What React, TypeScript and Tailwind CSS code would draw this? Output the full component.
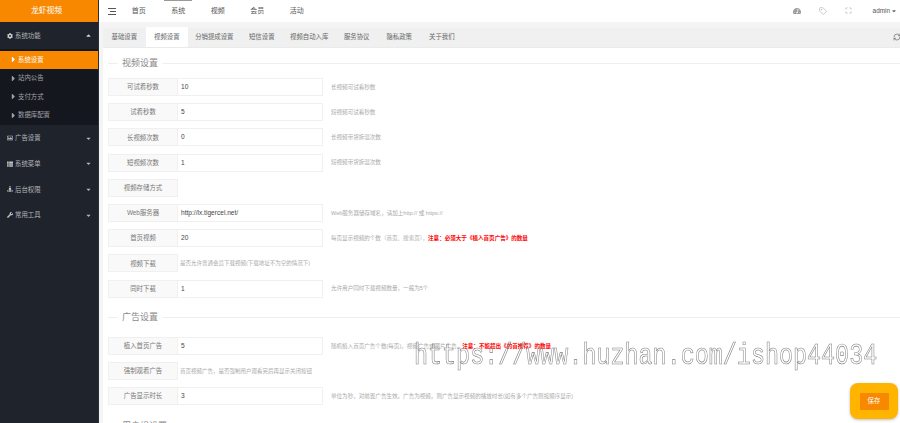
import React from 'react';
import { Tag, Scan, RefreshCw } from 'lucide-react';
import { FaCog, FaRegImage, FaThList, FaStreetView, FaWrench, FaCaretUp, FaCaretDown, FaCaretRight, FaTachometerAlt } from 'react-icons/fa';
import type { IconType } from 'react-icons';

const navItems = ['首页', '系统', '视频', '会员', '活动'];
const tabs = ['基础设置', '视频设置', '分销提成设置', '短信设置', '视频自动入库', '服务协议', '隐私政策', '关于我们'];
const subMenu = ['系统设置', '站内公告', '支付方式', '数据库配置'];
const menus: { name: string; icon: IconType }[] = [
    { name: '广告设置', icon: FaRegImage },
    { name: '系统菜单', icon: FaThList },
    { name: '后台权限', icon: FaStreetView },
    { name: '常用工具', icon: FaWrench },
];

type Row = { label: string; value?: string; desc?: string; note?: string; inlineDesc?: string };

const videoRows: Row[] = [
    { label: '可试看秒数', value: '10', desc: '长视频可试看秒数' },
    { label: '试看秒数', value: '5', desc: '短视频可试看秒数' },
    { label: '长视频次数', value: '0', desc: '长视频带货拆温次数' },
    { label: '短视频次数', value: '1', desc: '短视频带货拆温次数' },
    { label: '视频存储方式' },
    { label: 'Web服务器', value: 'http://lx.tigercel.net/', desc: 'Web服务器储存域名，请加上http:// 或 https://' },
    { label: '首页视频', value: '20', desc: '每页显示视频的个数（首页、搜索页），', note: '注意：必须大于《植入首页广告》的数量' },
    { label: '视频下载', inlineDesc: '是否允许普通会员下载视频(下载地址不为空的情况下)' },
    { label: '同时下载', value: '1', desc: '允许用户同时下载视频数量，一般为5个' },
];

const adRows: Row[] = [
    { label: '植入首页广告', value: '5', desc: '随机植入首页广告个数(每页)，视频广告或图片广告。', note: '注意：不能超出《的首推荐》的数量' },
    { label: '强制观看广告', inlineDesc: '首页视频广告，是否强制用户观看完后再显示关闭按钮' },
    { label: '广告显示时长', value: '3', desc: '单位为秒，对前置广告生效。广告为视频，则广告显示视频的播放时长(如有多个广告则按顺序显示)' },
];

const SectionTitle = ({ title }: { title: string }) => (
    <div className="flex items-center h-[12px]">
        <div className="w-[9px] h-px bg-[#eeeeee]"></div>
        <span className="mx-[5px] text-[9px] leading-[12px] text-[#8a8a8a]">{title}</span>
        <div className="flex-1 h-px bg-[#eeeeee]"></div>
    </div>
);

const FormRow = ({ row }: { row: Row }) => (
    <div className="flex items-center h-[18px] mb-[7.2px]">
        <div className="w-[70px] h-full flex items-center justify-center bg-[#f9f9f9] border border-[#f0f0f0] text-[6.4px] text-[#777777]">
            {row.label}
        </div>
        {row.inlineDesc && <span className="ml-[2px] text-[5.5px] text-[#aaaaaa] whitespace-nowrap">{row.inlineDesc}</span>}
        {!row.inlineDesc && row.value !== undefined && (
            <>
                <div className="w-[145px] h-full flex items-center pl-[3px] bg-white border border-l-0 border-[#f0f0f0] text-[6.6px] text-[#444444]">
                    {row.value}
                </div>
                <span className="ml-[8px] text-[5.55px] text-[#aaaaaa] whitespace-nowrap">
                    {row.desc}
                    {row.note && <span className="text-[#ff0000] font-bold">{row.note}</span>}
                </span>
            </>
        )}
    </div>
);

const App: React.FC = () => {
    return (
        <div className="relative flex w-[900px] h-[423px] overflow-hidden bg-white font-['Liberation_Sans','Noto_Sans_CJK_SC',sans-serif]">
            {/* Sidebar */}
            <aside className="w-[99px] shrink-0 bg-[#1f232c] text-[#b4b6ba] border-r border-[#2a2e36]">
                <div className="h-[22px] flex items-center justify-center pr-[5px] bg-[#f78800] text-[7.8px] text-white">龙虾视频</div>
                <div className="h-[27px] flex items-center pl-[7px] pr-[6px] text-[6.4px]">
                    <FaCog className="w-[6px] h-[6px] mr-[2px] text-[#d0d0d0]" />
                    <span>系统功能</span>
                    <FaCaretUp className="ml-auto w-[7px] h-[7px] text-[#d8d8d8]" />
                </div>
                <div className="bg-[#15171e] pt-[1.5px]">
                    {subMenu.map((item, i) => (
                        <div key={item} className={`h-[18.5px] flex items-center pl-[9px] text-[6.4px] ${i === 0 ? 'bg-[#f78800] text-white' : 'text-[#a0a2a6]'}`}>
                            <FaCaretRight className="w-[9px] h-[9px] mr-[0px]" />
                            <span>{item}</span>
                        </div>
                    ))}
                </div>
                <div className="pt-[1px]">
                    {menus.map((m) => {
                        const Icon = m.icon;
                        return (
                            <div key={m.name} className="h-[25.6px] flex items-center pl-[7px] pr-[6px] text-[6.4px]">
                                <Icon className="w-[6px] h-[6px] mr-[2px] text-[#c0c2c6]" />
                                <span>{m.name}</span>
                                <FaCaretDown className="ml-auto w-[7px] h-[7px] text-[#b8b8b8]" />
                            </div>
                        );
                    })}
                </div>
            </aside>

            <div className="flex-1 min-w-0 flex flex-col">
                {/* Top bar */}
                <header className="h-[22px] shrink-0 flex items-center text-[7px] text-[#555555]">
                    <svg viewBox="0 0 8 7" className="ml-[9px] w-[8px] h-[7px]" fill="none" stroke="#555555" strokeWidth="1">
                        <path d="M0 .5h8M2 3.5h6M0 6.5h8" />
                    </svg>
                    <nav className="flex ml-[3px]">
                        {navItems.map((item, i) => (
                            <div key={item} className="relative w-[39.5px] h-[22px] flex items-center justify-center">
                                {i === 1 && <div className="absolute top-0 left-[5px] right-[6px] h-px bg-[#999999]"></div>}
                                {item}
                            </div>
                        ))}
                    </nav>
                    <div className="ml-auto flex items-center text-[#999999]">
                        <FaTachometerAlt className="w-[8px] h-[8px]" />
                        <Tag className="ml-[18px] w-[8px] h-[8px]" strokeWidth={1.5} />
                        <Scan className="ml-[18px] w-[7px] h-[7px]" strokeWidth={2} />
                        <span className="ml-[21px] text-[6.4px] text-[#555555]">admin</span>
                        <FaCaretDown className="ml-[1px] mr-[3px] w-[6px] h-[6px] text-[#666666]" />
                    </div>
                </header>

                <div className="flex-1 min-h-0 flex bg-[#f4f4f4] pl-[4px]">
                    <div className="flex-1 min-w-0 flex flex-col">
                        {/* Tabs */}
                        <div className="h-[20px] shrink-0 mt-[6px] flex items-end bg-[#f0f0f0] border-b border-[#eaeaea]">
                            <div className="flex h-[20px]">
                                {tabs.map((t, i) => (
                                    <div key={t} className={`h-full flex items-center text-[6.4px] text-[#666666] ${t.length === 6 ? 'px-[7px]' : 'px-[8.5px]'} ${i === 1 ? 'bg-white' : ''}`}>
                                        {t}
                                    </div>
                                ))}
                            </div>
                            <RefreshCw className="ml-auto mb-[6px] mr-[-1px] w-[8px] h-[8px] shrink-0 text-[#666666]" />
                        </div>

                        {/* Form */}
                        <main className="flex-1 min-h-0 overflow-hidden bg-white pt-[9px] pl-[5px]">
                            <SectionTitle title="视频设置" />
                            <div className="mt-[9px]">
                                {videoRows.map((r) => <FormRow key={r.label} row={r} />)}
                            </div>
                            <div className="pt-[6.7px]">
                                <SectionTitle title="广告设置" />
                            </div>
                            <div className="mt-[13.5px]">
                                {adRows.map((r) => <FormRow key={r.label} row={r} />)}
                            </div>
                            <div className="pt-[7.5px]">
                                <SectionTitle title="用户组设置" />
                            </div>
                        </main>
                    </div>
                </div>
            </div>

            {/* Watermark over the page */}
            <div className="absolute left-[414px] top-[342px] scale-y-[1.25] will-change-transform font-['Liberation_Mono',monospace] text-[23.4px] leading-[28px] whitespace-nowrap text-transparent [-webkit-text-stroke:0.5px_#808080]">
                https://www.huzhan.com/ishop44034
            </div>

            {/* Floating save */}
            <div className="absolute left-[850px] top-[383px] w-[48px] h-[36px] flex items-center justify-center rounded-[8px] bg-[#ffb400] shadow-[0_1px_3px_rgba(0,0,0,0.25)]">
                <div className="w-[29px] h-[17px] flex items-center justify-center bg-[#f78800] text-[6.4px] text-white">保存</div>
            </div>
        </div>
    );
};

export default App;
